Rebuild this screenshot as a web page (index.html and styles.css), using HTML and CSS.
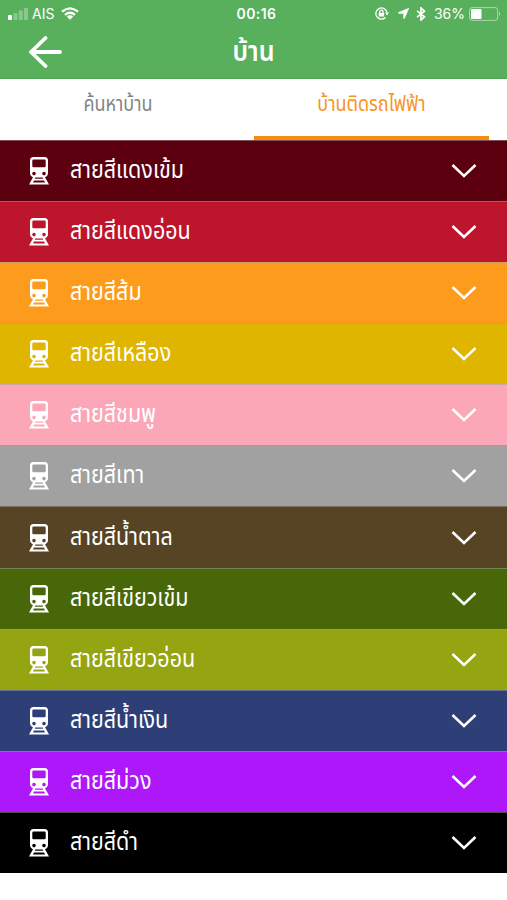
FILE: index.html
```html
<!DOCTYPE html>
<html lang="th">
<head>
    <meta charset="UTF-8">
    <meta name="viewport" content="width=device-width, initial-scale=1.0">
    <title>บ้าน</title>
    <link rel="stylesheet" href="styles.css">
</head>
<body>
    <svg class="sprite" aria-hidden="true">
        <symbol id="train" viewBox="0 0 20 28">
            <path fill="currentColor" fill-rule="evenodd" d="M4.500 0h11Q19 0 19 3.500V16q0 3-3 4.300L20 27.500H0L4 20.300Q1 19 1 16V3.500Q1 0 4.500 0zM4.500 2.500Q3.300 2.500 3.300 3.700V9q0 1.200 1.200 1.200h11q1.200 0 1.200-1.200V3.700q0-1.200-1.200-1.200zM5 14.800a1.800 1.800 0 1 0 0 3.600A1.800 1.800 0 0 0 5 14.800zM15 14.800a1.800 1.800 0 1 0 0 3.600A1.800 1.800 0 0 0 15 14.800zM6.300 20.500L5.800 21.700h8.400l-.5-1.200zM4.900 23.600L4 25.500h12l-.9-1.900z"/>
        </symbol>
        <symbol id="chevron" viewBox="0 0 26 16">
            <path fill="none" stroke="currentColor" stroke-width="2.600" d="M1.500 2L13 13 24.500 2"/>
        </symbol>
    </svg>

    <header class="header">
        <div class="status">
            <div class="status-left">
                <svg class="signal" width="20" height="12" viewBox="0 0 20 12" fill="#fff">
                    <rect x="0" y="7" width="4" height="5" rx="1"/>
                    <g opacity=".3">
                        <rect x="5.500" y="5" width="4" height="7" rx="1"/>
                        <rect x="10.800" y="2.500" width="4" height="9.500" rx="1"/>
                        <rect x="16" y="0" width="4" height="12" rx="1"/>
                    </g>
                </svg>
                <span class="carrier">AIS</span>
                <svg width="18" height="13" viewBox="0 0 18 13" fill="none" stroke="#fff" stroke-width="2.300">
                    <path d="M1 4.700Q9-2 17 4.700M4 7.800Q9 3.700 14 7.800"/>
                    <path fill="#fff" stroke="none" d="M5.800 9.600Q9 7 12.200 9.600L9 12.800z"/>
                </svg>
            </div>
            <span class="time">00:16</span>
            <div class="status-right">
                <svg width="14" height="13" viewBox="0 0 14 13" fill="none" stroke="#fff" stroke-width="1.300">
                    <path d="M10.500 10.500A5.600 5.600 0 1 1 12 5.500"/>
                    <path fill="#fff" stroke="none" d="M10 5.500h4L12 8.500zM3.700 6h5.400v3.600H3.700z"/>
                    <path d="M4.800 6V4.800a1.600 1.600 0 0 1 3.200 0V6"/>
                </svg>
                <svg class="location" width="12" height="12" viewBox="0 0 12 12" fill="none" stroke="#fff" stroke-width="1.400">
                    <path fill="#fff" d="M11 1L7 10.500V5L1.500 5z"/>
                </svg>
                <svg width="10" height="14" viewBox="0 0 10 14" fill="none" stroke="#fff" stroke-width="1.700">
                    <path d="M1 3.800l7.500 6L5 13V1l3.500 3.200L1 10.200"/>
                </svg>
                <span class="percent">36%</span>
                <svg width="32" height="14" viewBox="0 0 32 14">
                    <rect x=".6" y=".6" width="28" height="12.800" rx="2.500" fill="none" stroke="#fff" stroke-opacity=".5"/>
                    <rect x="2" y="2" width="10.500" height="10" rx="1" fill="#fff"/>
                    <path fill="#fff" fill-opacity=".6" d="M30 4.800q2 2.200 0 4.400z"/>
                </svg>
            </div>
        </div>
        <div class="navbar">
            <svg class="back" width="34" height="32" viewBox="0 0 34 32" fill="none" stroke="#fff" stroke-width="3.800" stroke-linecap="round" stroke-linejoin="round">
                <path d="M16.500 2L2 16l14.500 14M3 16h28"/>
            </svg>
            <h1 class="title">บ้าน</h1>
        </div>
    </header>

    <nav class="tabs">
        <a class="tab"><span class="label">ค้นหาบ้าน</span></a>
        <a class="tab active"><span class="label">บ้านติดรถไฟฟ้า</span></a>
    </nav>

    <ul class="lines">
        <li class="line darkred"><svg class="train"><use href="#train"/></svg><span class="name">สายสีแดงเข้ม</span><svg class="chevron"><use href="#chevron"/></svg></li>
        <li class="line red"><svg class="train"><use href="#train"/></svg><span class="name">สายสีแดงอ่อน</span><svg class="chevron"><use href="#chevron"/></svg></li>
        <li class="line orange"><svg class="train"><use href="#train"/></svg><span class="name">สายสีส้ม</span><svg class="chevron"><use href="#chevron"/></svg></li>
        <li class="line yellow"><svg class="train"><use href="#train"/></svg><span class="name">สายสีเหลือง</span><svg class="chevron"><use href="#chevron"/></svg></li>
        <li class="line pink"><svg class="train"><use href="#train"/></svg><span class="name">สายสีชมพู</span><svg class="chevron"><use href="#chevron"/></svg></li>
        <li class="line gray"><svg class="train"><use href="#train"/></svg><span class="name">สายสีเทา</span><svg class="chevron"><use href="#chevron"/></svg></li>
        <li class="line brown"><svg class="train"><use href="#train"/></svg><span class="name">สายสีน้ำตาล</span><svg class="chevron"><use href="#chevron"/></svg></li>
        <li class="line darkgreen"><svg class="train"><use href="#train"/></svg><span class="name">สายสีเขียวเข้ม</span><svg class="chevron"><use href="#chevron"/></svg></li>
        <li class="line lightgreen"><svg class="train"><use href="#train"/></svg><span class="name">สายสีเขียวอ่อน</span><svg class="chevron"><use href="#chevron"/></svg></li>
        <li class="line blue"><svg class="train"><use href="#train"/></svg><span class="name">สายสีน้ำเงิน</span><svg class="chevron"><use href="#chevron"/></svg></li>
        <li class="line purple"><svg class="train"><use href="#train"/></svg><span class="name">สายสีม่วง</span><svg class="chevron"><use href="#chevron"/></svg></li>
        <li class="line black"><svg class="train"><use href="#train"/></svg><span class="name">สายสีดำ</span><svg class="chevron"><use href="#chevron"/></svg></li>
    </ul>
</body>
</html>
```
FILE: styles.css
```css
* {
    box-sizing: border-box;
}
body {
    font-family: "Noto Sans Thai", "Noto Sans", "Liberation Sans", sans-serif;
    background-color: #fff;
    margin: 0;
}
svg {
    display: block;
    flex: none;
}
.sprite {
    width: 0;
    height: 0;
    display: none;
}
.header {
    height: 79px;
    background-color: #58b05c;
    border-bottom: 1px solid #52a556;
    color: #fff;
}
.status {
    height: 27px;
    padding: 0 6px 0 8px;
    display: grid;
    grid-template-columns: 1fr auto 1fr;
    align-items: center;
    font-family: Inter, sans-serif;
    font-size: 14px;
}
.status-left, .status-right {
    display: flex;
    align-items: center;
}
.status-right {
    justify-content: flex-end;
}
.carrier {
    margin: 0 7px 0 4px;
}
.time {
    padding-left: 4px;
    font-weight: 600;
    letter-spacing: 0.4px;
}
.location {
    margin: 0 7px 0 8px;
}
.percent {
    margin: 0 4px 0 8px;
}
.navbar {
    height: 50px;
    padding: 0 29px;
    display: grid;
    grid-template-columns: 34px 1fr 34px;
    align-items: center;
}
.title {
    margin: 0;
    font-size: 25px;
    font-weight: 600;
    line-height: 50px;
    text-align: center;
    transform: scaleY(1.15);
}
.tabs {
    height: 61px;
    padding-right: 18px;
    display: grid;
    grid-template-columns: 1fr 235px;
    column-gap: 18px;
}
.tab {
    font-size: 18px;
    line-height: 52px;
    text-align: center;
    color: #858585;
    border-bottom: 4px solid transparent;
}
.label {
    display: block;
    transform: scaleY(1.15);
}
.tab.active {
    color: #f7941d;
    border-color: #f78a12;
}
.lines {
    list-style: none;
    margin: 0;
    padding: 0;
    height: 733px;
    display: grid;
    grid-template-rows: repeat(12, 1fr);
}
.line {
    display: flex;
    align-items: center;
    padding: 0 30px 0 29px;
    border-top: 1px solid rgba(160, 160, 160, 0.5);
    color: #fff;
}
.train {
    width: 20px;
    height: 28px;
}
.name {
    flex: 1;
    margin-left: 21px;
    font-size: 21.5px;
    line-height: 56px;
    transform: scaleY(1.16);
}
.chevron {
    width: 26px;
    height: 16px;
}
.darkred { background-color: #5c0010; }
.red { background-color: #bd152c; }
.orange { background-color: #fc9b1c; }
.yellow { background-color: #e0b500; }
.pink { background-color: #fba7b8; }
.gray { background-color: #a1a1a1; }
.brown { background-color: #574424; }
.darkgreen { background-color: #486709; }
.lightgreen { background-color: #95a411; }
.blue { background-color: #2e3f78; }
.purple { background-color: #ad17fa; }
.black { background-color: #000; }
```
